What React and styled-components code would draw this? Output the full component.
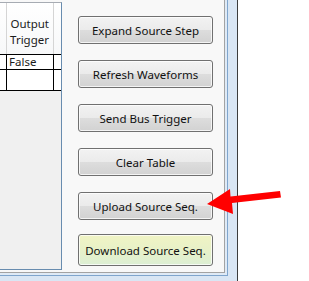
import React from "react";
import styled, { createGlobalStyle } from "styled-components";

const font = `"Noto Sans", "Open Sans", sans-serif`;

const GlobalStyle = createGlobalStyle`
  html, body {
    margin: 0;
    padding: 0;
    background: #ffffff;
  }
  body {
    font-family: ${font};
    font-size: 11.5px;
    color: #1b1b1b;
  }
`;

const Page = styled.div`
  position: relative;
  display: flex;
  width: 309px;
  height: 281px;
  overflow: hidden;
`;

// outer window frame (light blue glass + dark edge)
const Frame = styled.div`
  box-sizing: border-box;
  width: 238px;
  height: 281px;
  padding: 0 9px 5px 0;
  background: #d9e6f4;
  border-right: 1px solid #3c3c3c;
`;

const FrameInner = styled.div`
  box-sizing: border-box;
  height: 276px;
  padding: 0 2px 2px 0;
  background: #dfeaf6;
  border-right: 1px solid #7fa5cd;
  border-bottom: 1px solid #7fa5cd;
`;

const Content = styled.div`
  box-sizing: border-box;
  display: flex;
  width: 225px;
  height: 273px;
  background: #f8f8f8;
  border-right: 1px solid #a3a3a3;
  border-bottom: 1px solid #a3a3a3;
`;

const Grid = styled.div`
  box-sizing: border-box;
  flex: none;
  width: 62px;
  height: 268px;
  margin-top: 2px;
  background: #f0f0f0;
  border-top: 1px solid #a7acb3;
  border-right: 1px solid #688caf;
  border-bottom: 1px solid #688caf;
  overflow: hidden;
`;

const HeaderRow = styled.div`
  display: flex;
  height: 51px;
  background: linear-gradient(#ffffff, #f7f8f9);
`;

const HeaderCell = styled.div`
  box-sizing: border-box;
  display: flex;
  flex-direction: column;
  justify-content: center;
  align-items: flex-end;
  width: ${(p) => p.$w}px;
  padding: 6px ${(p) => p.$pr || 0}px 0 0;
  border-right: ${(p) => (p.$last ? "none" : "1px solid #d5d5d5")};
  flex: ${(p) => (p.$last ? "1" : "none")};
  line-height: 16px;
  white-space: nowrap;
  overflow: hidden;
`;

const Row = styled.div`
  display: flex;
  height: ${(p) => p.$h}px;
  background: #ffffff;
  border-top: 1px solid #000000;
  border-bottom: ${(p) => (p.$last ? "1px solid #000000" : "none")};
`;

const Cell = styled.div`
  box-sizing: border-box;
  width: ${(p) => p.$w}px;
  flex: ${(p) => (p.$last ? "1" : "none")};
  padding-left: 2px;
  border-right: ${(p) => (p.$last ? "none" : "1px solid #000000")};
  line-height: 14px;
  white-space: nowrap;
`;

const Buttons = styled.div`
  display: flex;
  flex-direction: column;
  gap: 16px;
  width: 135px;
  margin-left: 16px;
  padding-top: 16px;
`;

const Button = styled.button`
  box-sizing: border-box;
  height: ${(p) => (p.$tall ? 32 : 28)}px;
  margin-top: ${(p) => (p.$tall ? -2 : 0)}px;
  padding: 0;
  font-family: ${font};
  font-size: 11.5px;
  color: #111111;
  border: 1px solid #707070;
  border-radius: 3px;
  box-shadow: inset 0 0 0 1px rgba(255, 255, 255, 0.75);
  background: ${(p) =>
    p.$green
      ? "linear-gradient(#f0f4c4 0%, #e8f1c8 50%, #dcefd4 100%)"
      : "linear-gradient(#f2f2f2 0%, #ebebeb 50%, #dddddd 51%, #d2d2d2 100%)"};
`;

const Arrow = styled.svg`
  position: absolute;
  left: 0;
  top: 0;
  pointer-events: none;
`;

const buttons = [
  "Expand Source Step",
  "Refresh Waveforms",
  "Send Bus Trigger",
  "Clear Table",
  "Upload Source Seq.",
];

export default function App() {
  return (
    <Page>
      <GlobalStyle />
      <Frame>
        <FrameInner>
          <Content>
            <Grid>
              <HeaderRow>
                <HeaderCell $w={7} />
                <HeaderCell $w={47} $pr={4}>
                  <span>Output</span>
                  <span>Trigger</span>
                </HeaderCell>
                <HeaderCell $last />
              </HeaderRow>
              <Row $h={14}>
                <Cell $w={7} />
                <Cell $w={47}>False</Cell>
                <Cell $last />
              </Row>
              <Row $h={20} $last>
                <Cell $w={7} />
                <Cell $w={47} />
                <Cell $last />
              </Row>
            </Grid>
            <Buttons>
              {buttons.map((b) => (
                <Button key={b}>{b}</Button>
              ))}
              <Button $tall $green>
                Download Source Seq.
              </Button>
            </Buttons>
          </Content>
        </FrameInner>
      </Frame>
      <Arrow width="309" height="281" viewBox="0 0 309 281">
        <polygon
          points="207,204 230,189 230.5,196.5 280,191 281,197.5 232,203 233,214"
          fill="#ff0000"
        />
      </Arrow>
    </Page>
  );
}
